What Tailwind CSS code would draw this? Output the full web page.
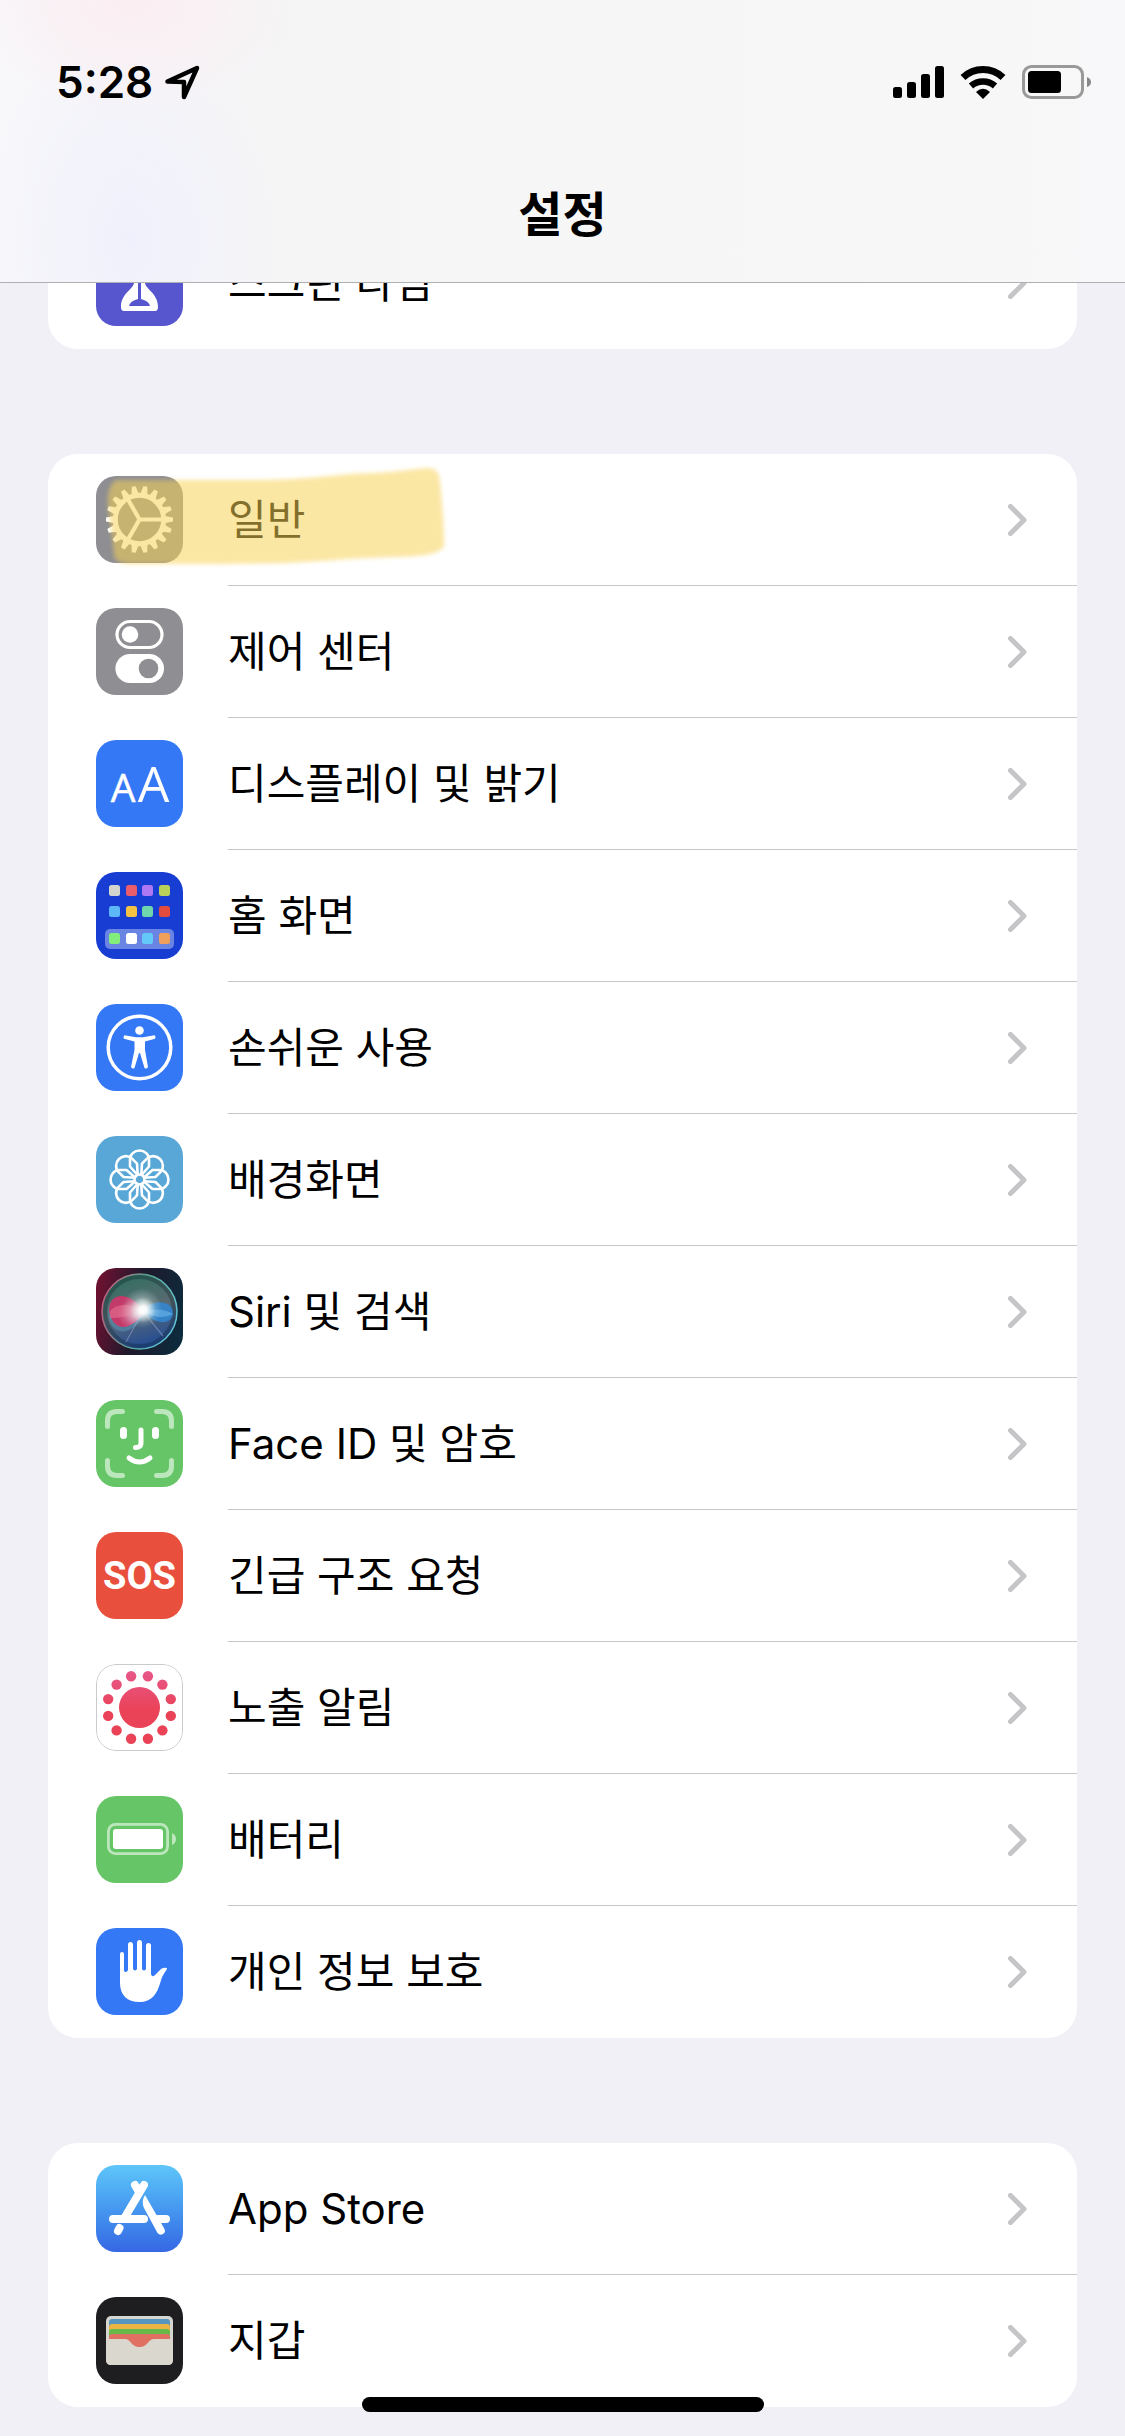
<!DOCTYPE html>
<html lang="ko">
<head>
    <meta charset="UTF-8">
    <meta name="viewport" content="width=device-width, initial-scale=1.0">
    <title>설정</title>
    <script src="https://cdn.jsdelivr.net/npm/@tailwindcss/browser@4"></script>
</head>
<body class="bg-[#f1f0f6] text-black font-['Inter','Noto_Sans_CJK_KR',sans-serif]">
    <!-- 공용 심볼 -->
    <svg class="hidden">
        <symbol id="chevron" viewBox="0 0 19 32">
            <path d="M2.5 2.5 16 16 2.5 29.500" fill="none" stroke="#c5c5c7" stroke-width="5" stroke-linecap="round" stroke-linejoin="round"/>
        </symbol>
    </svg>

    <!-- 상단 헤더 -->
    <header class="fixed inset-x-0 top-0 z-10 h-[283px] border-b border-[#b0b0b4] bg-[#f7f7f7] bg-[radial-gradient(ellipse_170px_120px_at_130px_0px,#fbedf1,transparent),radial-gradient(ellipse_150px_220px_at_130px_240px,#eff0fb,transparent),linear-gradient(90deg,#f8f8fb,#f5f5f6_25%,#f6f6f6_40%,#f7f7f7_85%,#f8f8fa)]">
        <div class="flex h-[164px] items-center justify-between pl-14 pr-[34px]">
            <div class="flex items-center gap-3">
                <span class="text-[44px] font-semibold leading-none">5:28</span>
                <svg class="h-[35px] w-[35px]" viewBox="0 0 35 35" fill="none" stroke="#000" stroke-width="4.500" stroke-linejoin="round">
                    <path d="M2.500 16.500 32 3 19 32 V17 Z"/>
                </svg>
            </div>
            <div class="flex items-center gap-4">
                <!-- 신호 -->
                <svg class="h-[34px] w-[51px]" viewBox="0 0 51 34">
                    <rect x="0" y="22" width="9" height="11" rx="2.500"/>
                    <rect x="14" y="17" width="9" height="16" rx="2.500"/>
                    <rect x="28" y="9" width="9" height="24" rx="2.500"/>
                    <rect x="42" y="1" width="9" height="32" rx="2.500"/>
                </svg>
                <!-- 와이파이 -->
                <svg class="h-[34px] w-[46px]" viewBox="0 0 46 34">
                    <path d="M3 12.500A29 29 0 0 1 43 12.500" fill="none" stroke="#000" stroke-width="7"/>
                    <path d="M11 21A18 18 0 0 1 35 21" fill="none" stroke="#000" stroke-width="6.500"/>
                    <path d="M16 27Q23 20.500 30 27L23 34Z"/>
                </svg>
                <!-- 배터리 -->
                <svg class="h-[34px] w-[69px]" viewBox="0 0 69 34">
                    <rect x="1.500" y="1.500" width="59" height="31" rx="8" fill="none" stroke="#999" stroke-width="3"/>
                    <rect x="6" y="6" width="33" height="22" rx="3.500"/>
                    <path d="M65 12q4 1.500 4 5t-4 5Z" fill="#888"/>
                </svg>
            </div>
        </div>
        <h1 class="flex h-[102px] items-center justify-center text-[48px] font-bold leading-none">설정</h1>
    </header>

    <main class="flex min-h-screen flex-col gap-[105px] px-12 pt-[217px] pb-[29px]">
        <!-- 스크린 타임 -->
        <ul class="overflow-hidden rounded-b-[30px] bg-white text-[42px] leading-none">
            <li>
                <a href="#" class="flex pl-12">
                    <svg class="mt-[22px] h-[87px] w-[87px] shrink-0 rounded-[20px] bg-[#5756ce]" viewBox="0 0 87 87">
                        <path d="M28 15h31q3 0 3 4c0 14-13 18-13 24.500S62 54 62 68q0 4-3 4H28q-3 0-3-4c0-14 13-18 13-24.500S25 33 25 19q0-4 3-4Z" fill="#fff"/>
                        <path d="M42 40h3v20q8 2 9 7H33q1-5 9-7Z" fill="#5756ce"/>
                    </svg>
                    <div class="ml-[45px] flex h-[132px] flex-1 items-center justify-between pr-[50px]">
                        <span>스크린 타임</span>
                        <svg class="h-8 w-[19px]"><use href="#chevron"/></svg>
                    </div>
                </a>
            </li>
        </ul>

        <ul class="rounded-[30px] bg-white text-[42px] leading-none">
            <!-- 일반 -->
            <li class="relative">
                <a href="#" class="flex pl-12">
                    <svg class="mt-[22px] h-[87px] w-[87px] shrink-0 rounded-[20px] bg-[#8e8e93]" viewBox="0 0 87 87">
                        <defs>
                            <path id="teeth" d="M-3.500-26-2-33.500H2L3.500-26ZM-3.500 26-2 33.500H2L3.500 26Z"/>
                        </defs>
                        <g transform="translate(43.500 43.500)" fill="#fff">
                            <circle r="24.200" fill="none" stroke="#fff" stroke-width="5"/>
                            <use href="#teeth" transform="rotate(10)"/>
                            <use href="#teeth" transform="rotate(30)"/>
                            <use href="#teeth" transform="rotate(50)"/>
                            <use href="#teeth" transform="rotate(70)"/>
                            <use href="#teeth" transform="rotate(90)"/>
                            <use href="#teeth" transform="rotate(110)"/>
                            <use href="#teeth" transform="rotate(130)"/>
                            <use href="#teeth" transform="rotate(150)"/>
                            <use href="#teeth" transform="rotate(170)"/>
                            <path d="M0 0H23M0 0-11.500-20M0 0-11.500 20" fill="none" stroke="#fff" stroke-width="4.200"/>
                        </g>
                    </svg>
                    <div class="ml-[45px] flex h-[132px] flex-1 items-center justify-between border-b border-[#c6c6c8] pr-[50px]">
                        <span>일반</span>
                        <svg class="h-8 w-[19px]"><use href="#chevron"/></svg>
                    </div>
                </a>
                <!-- 형광펜 표시 -->
                <svg class="pointer-events-none absolute left-[54px] top-2 h-[110px] w-[346px]" viewBox="0 0 346 110">
                    <path d="M14 18H150C210 18 230 12 270 11 295 10 310 7 325 6 335 6 337 11 338 19 340 40 342 60 342 84 338 92 322 94 300 95 230 96 220 102 120 102H30Q14 102 12 94 10 70 6 46 4 24 14 18Z" fill="#f8d253" fill-opacity=".53" class="blur-[2px]"/>
                </svg>
            </li>
            <!-- 제어 센터 -->
            <li>
                <a href="#" class="flex pl-12">
                    <svg class="mt-[22px] h-[87px] w-[87px] shrink-0 rounded-[20px] bg-[#8e8e93]" viewBox="0 0 87 87">
                        <rect x="21" y="13.500" width="45" height="26" rx="13" fill="none" stroke="#fff" stroke-width="3.200"/>
                        <circle cx="34" cy="26.500" r="8.300" fill="#fff"/>
                        <rect x="19.400" y="46" width="48.600" height="29" rx="14.500" fill="#fff"/>
                        <circle cx="52.500" cy="60.500" r="9.800" fill="#8e8e93"/>
                    </svg>
                    <div class="ml-[45px] flex h-[132px] flex-1 items-center justify-between border-b border-[#c6c6c8] pr-[50px]">
                        <span>제어 센터</span>
                        <svg class="h-8 w-[19px]"><use href="#chevron"/></svg>
                    </div>
                </a>
            </li>
            <!-- 디스플레이 및 밝기 -->
            <li>
                <a href="#" class="flex pl-12">
                    <svg class="mt-[22px] h-[87px] w-[87px] shrink-0 rounded-[20px] bg-[#3478f6]" viewBox="0 0 87 87" fill="#fff" font-family="Open Sans, sans-serif" text-anchor="middle">
                        <text x="27" y="61.500" font-size="39" stroke="#fff" stroke-width=".5">A</text>
                        <text x="57.500" y="61.500" font-size="50">A</text>
                    </svg>
                    <div class="ml-[45px] flex h-[132px] flex-1 items-center justify-between border-b border-[#c6c6c8] pr-[50px]">
                        <span>디스플레이 및 밝기</span>
                        <svg class="h-8 w-[19px]"><use href="#chevron"/></svg>
                    </div>
                </a>
            </li>
            <!-- 홈 화면 -->
            <li>
                <a href="#" class="flex pl-12">
                    <svg class="mt-[22px] h-[87px] w-[87px] shrink-0 rounded-[20px] bg-[#183dd3]" viewBox="0 0 87 87">
                        <rect x="13" y="13" width="11" height="11" rx="2.500" fill="#d5d5d0"/>
                        <rect x="30" y="13" width="11" height="11" rx="2.500" fill="#eb5d6b"/>
                        <rect x="46" y="13" width="11" height="11" rx="2.500" fill="#ae78f5"/>
                        <rect x="63" y="13" width="11" height="11" rx="2.500" fill="#b9d158"/>
                        <rect x="13" y="34" width="11" height="11" rx="2.500" fill="#5db8f8"/>
                        <rect x="30" y="34" width="11" height="11" rx="2.500" fill="#f6c244"/>
                        <rect x="46" y="34" width="11" height="11" rx="2.500" fill="#6fd5ad"/>
                        <rect x="63" y="34" width="11" height="11" rx="2.500" fill="#e34b3f"/>
                        <rect x="9" y="57" width="69" height="20" rx="5" fill="#6a84e3"/>
                        <rect x="13" y="61" width="11" height="11" rx="2.500" fill="#84ee7d"/>
                        <rect x="30" y="61" width="11" height="11" rx="2.500" fill="#fff"/>
                        <rect x="46" y="61" width="11" height="11" rx="2.500" fill="#63c9f9"/>
                        <rect x="63" y="61" width="11" height="11" rx="2.500" fill="#f0a05a"/>
                    </svg>
                    <div class="ml-[45px] flex h-[132px] flex-1 items-center justify-between border-b border-[#c6c6c8] pr-[50px]">
                        <span>홈 화면</span>
                        <svg class="h-8 w-[19px]"><use href="#chevron"/></svg>
                    </div>
                </a>
            </li>
            <!-- 손쉬운 사용 -->
            <li>
                <a href="#" class="flex pl-12">
                    <svg class="mt-[22px] h-[87px] w-[87px] shrink-0 rounded-[20px] bg-[#3478f6]" viewBox="0 0 87 87">
                        <circle cx="43.500" cy="43.500" r="31.300" fill="none" stroke="#fff" stroke-width="3.500"/>
                        <circle cx="43.500" cy="26.500" r="4.300" fill="#fff"/>
                        <path d="M28.500 31.300 40 33.200H47L58.500 31.300Q60.500 33 59 34.800L49 37.500V46L52 63Q50.500 65.500 48.500 64L44 49H43L38.500 64Q36.500 65.500 35 63L38.500 46V37.500L28 34.800Q26.500 33 28.500 31.300Z" fill="#fff"/>
                    </svg>
                    <div class="ml-[45px] flex h-[132px] flex-1 items-center justify-between border-b border-[#c6c6c8] pr-[50px]">
                        <span>손쉬운 사용</span>
                        <svg class="h-8 w-[19px]"><use href="#chevron"/></svg>
                    </div>
                </a>
            </li>
            <!-- 배경화면 -->
            <li>
                <a href="#" class="flex pl-12">
                    <svg class="mt-[22px] h-[87px] w-[87px] shrink-0 rounded-[20px] bg-[#59a7d7]" viewBox="0 0 87 87">
                        <defs>
                            <path id="petal" d="M-2-4.500-9.500-13V-20A9.500 9 0 0 1 9.500-20V-13L2-4.500"/>
                        </defs>
                        <g transform="translate(43.500 43.500)" fill="none" stroke="#fff" stroke-width="2.600" stroke-linejoin="round">
                            <circle r="5"/>
                            <use href="#petal"/>
                            <use href="#petal" transform="rotate(45)"/>
                            <use href="#petal" transform="rotate(90)"/>
                            <use href="#petal" transform="rotate(135)"/>
                            <use href="#petal" transform="rotate(180)"/>
                            <use href="#petal" transform="rotate(225)"/>
                            <use href="#petal" transform="rotate(270)"/>
                            <use href="#petal" transform="rotate(315)"/>
                        </g>
                    </svg>
                    <div class="ml-[45px] flex h-[132px] flex-1 items-center justify-between border-b border-[#c6c6c8] pr-[50px]">
                        <span>배경화면</span>
                        <svg class="h-8 w-[19px]"><use href="#chevron"/></svg>
                    </div>
                </a>
            </li>
            <!-- Siri -->
            <li>
                <a href="#" class="flex pl-12">
                    <svg class="mt-[22px] h-[87px] w-[87px] shrink-0 rounded-[20px]" viewBox="0 0 87 87">
                        <defs>
                            <linearGradient id="siriBg" x1="0" y1=".4" x2="1" y2=".6">
                                <stop offset="0" stop-color="#6b1230"/>
                                <stop offset=".45" stop-color="#20182c"/>
                                <stop offset="1" stop-color="#0d2b3c"/>
                            </linearGradient>
                            <linearGradient id="siriOrb" x1=".3" y1="0" x2=".6" y2="1">
                                <stop offset="0" stop-color="#2f6f60"/>
                                <stop offset=".5" stop-color="#5a6a72"/>
                                <stop offset="1" stop-color="#204a98"/>
                            </linearGradient>
                            <linearGradient id="siriRing" x1="0" y1=".3" x2="1" y2=".6">
                                <stop offset="0" stop-color="#c75a7c"/>
                                <stop offset=".5" stop-color="#57a592"/>
                                <stop offset="1" stop-color="#62c6d8"/>
                            </linearGradient>
                            <radialGradient id="siriPink" cx=".75" cy=".6">
                                <stop offset="0" stop-color="#f4a4bd"/>
                                <stop offset="1" stop-color="#d62e62"/>
                            </radialGradient>
                            <radialGradient id="siriGlow">
                                <stop offset="0" stop-color="#fff"/>
                                <stop offset=".3" stop-color="#fff" stop-opacity=".9"/>
                                <stop offset="1" stop-color="#cfeee8" stop-opacity="0"/>
                            </radialGradient>
                        </defs>
                        <rect width="87" height="87" fill="url(#siriBg)"/>
                        <circle cx="43.500" cy="43.500" r="37.500" fill="url(#siriOrb)" stroke="url(#siriRing)" stroke-width="1.500"/>
                        <circle cx="43.500" cy="43.500" r="34.500" fill="none" stroke="#071a22" stroke-opacity=".3" stroke-width="4"/>
                        <path d="M12 46C12 24 32 24 47 41 59 30 76 34 76 45S61 57 49 46C32 74 13 64 12 46Z" fill="#5c9cbd" fill-opacity=".5"/>
                        <path d="M13 43C13 22 36 24 48 44 36 63 17 65 13 43Z" fill="url(#siriPink)" fill-opacity=".85"/>
                        <path d="M14 43Q28 30 48 44 29 50 14 50Z" fill="#f0839f" fill-opacity=".45"/>
                        <path d="M48 44C56 30 76 32 77 44S61 59 48 44Z" fill="#2e83d1" fill-opacity=".8"/>
                        <path d="M48 44Q64 38 77 46 65 53 48 44Z" fill="#6bb5ec" fill-opacity=".6"/>
                        <path d="M46 45 30 74M50 47 67 68" stroke="#9ba6cf" stroke-opacity=".5" stroke-width="1.200"/>
                        <ellipse cx="46" cy="40" rx="20" ry="20" fill="url(#siriGlow)" fill-opacity=".5"/>
                        <ellipse cx="47" cy="42" rx="13" ry="13" fill="url(#siriGlow)"/>
                    </svg>
                    <div class="ml-[45px] flex h-[132px] flex-1 items-center justify-between border-b border-[#c6c6c8] pr-[50px]">
                        <span>Siri 및 검색</span>
                        <svg class="h-8 w-[19px]"><use href="#chevron"/></svg>
                    </div>
                </a>
            </li>
            <!-- Face ID -->
            <li>
                <a href="#" class="flex pl-12">
                    <svg class="mt-[22px] h-[87px] w-[87px] shrink-0 rounded-[20px] bg-[#66c567]" viewBox="0 0 87 87" fill="none" stroke="#fff" stroke-width="5" stroke-linecap="round">
                        <path d="M11.500 26.500V21Q11.500 11.500 21 11.500H26.500M60.500 11.500H66Q75.500 11.500 75.500 21V26.500M75.500 60.500V66Q75.500 75.500 66 75.500H60.500M26.500 75.500H21Q11.500 75.500 11.500 66V60.500" stroke="#bce7bd"/>
                        <path d="M27.500 30.500V35.500M59.500 30.500V35.500" stroke-width="7"/>
                        <path d="M45 30V43Q45 47.500 39.500 47.500M33 58Q43.500 66 54 58"/>
                    </svg>
                    <div class="ml-[45px] flex h-[132px] flex-1 items-center justify-between border-b border-[#c6c6c8] pr-[50px]">
                        <span>Face ID 및 암호</span>
                        <svg class="h-8 w-[19px]"><use href="#chevron"/></svg>
                    </div>
                </a>
            </li>
            <!-- 긴급 구조 요청 -->
            <li>
                <a href="#" class="flex pl-12">
                    <svg class="mt-[22px] h-[87px] w-[87px] shrink-0 rounded-[20px] bg-[#e94f3d]" viewBox="0 0 87 87">
                        <text x="43.500" y="57" text-anchor="middle" font-family="Roboto, sans-serif" font-weight="700" font-size="38" fill="#fff">SOS</text>
                    </svg>
                    <div class="ml-[45px] flex h-[132px] flex-1 items-center justify-between border-b border-[#c6c6c8] pr-[50px]">
                        <span>긴급 구조 요청</span>
                        <svg class="h-8 w-[19px]"><use href="#chevron"/></svg>
                    </div>
                </a>
            </li>
            <!-- 노출 알림 -->
            <li>
                <a href="#" class="flex pl-12">
                    <svg class="mt-[22px] h-[87px] w-[87px] shrink-0 rounded-[20px] bg-white" viewBox="0 0 87 87">
                        <defs>
                            <linearGradient id="exposure" gradientUnits="userSpaceOnUse" x1="0" y1="7" x2="0" y2="60">
                                <stop offset="0" stop-color="#e7588a"/>
                                <stop offset=".75" stop-color="#ea4257"/>
                            </linearGradient>
                        </defs>
                        <rect x=".5" y=".5" width="86" height="86" rx="19.500" fill="none" stroke="#cbcbcd"/>
                        <g fill="url(#exposure)">
                            <circle cx="43.500" cy="43.500" r="20.500"/>
                            <circle cx="35.100" cy="12.200" r="5.200"/>
                            <circle cx="51.900" cy="12.200" r="5.200"/>
                            <circle cx="20.600" cy="20.600" r="5.200"/>
                            <circle cx="66.400" cy="20.600" r="5.200"/>
                            <circle cx="12.200" cy="35.100" r="5.200"/>
                            <circle cx="74.800" cy="35.100" r="5.200"/>
                            <circle cx="12.200" cy="51.900" r="5.200"/>
                            <circle cx="74.800" cy="51.900" r="5.200"/>
                            <circle cx="20.600" cy="66.400" r="5.200"/>
                            <circle cx="66.400" cy="66.400" r="5.200"/>
                            <circle cx="35.100" cy="74.800" r="5.200"/>
                            <circle cx="51.900" cy="74.800" r="5.200"/>
                        </g>
                    </svg>
                    <div class="ml-[45px] flex h-[132px] flex-1 items-center justify-between border-b border-[#c6c6c8] pr-[50px]">
                        <span>노출 알림</span>
                        <svg class="h-8 w-[19px]"><use href="#chevron"/></svg>
                    </div>
                </a>
            </li>
            <!-- 배터리 -->
            <li>
                <a href="#" class="flex pl-12">
                    <svg class="mt-[22px] h-[87px] w-[87px] shrink-0 rounded-[20px] bg-[#66c567]" viewBox="0 0 87 87">
                        <rect x="12.400" y="28.400" width="59.200" height="29.200" rx="7" fill="none" stroke="#bce7bd" stroke-width="2.800"/>
                        <rect x="17" y="33" width="50" height="20" rx="3" fill="#fff"/>
                        <path d="M76 37q4 2 4 6t-4 6Z" fill="#bce7bd"/>
                    </svg>
                    <div class="ml-[45px] flex h-[132px] flex-1 items-center justify-between border-b border-[#c6c6c8] pr-[50px]">
                        <span>배터리</span>
                        <svg class="h-8 w-[19px]"><use href="#chevron"/></svg>
                    </div>
                </a>
            </li>
            <!-- 개인 정보 보호 -->
            <li>
                <a href="#" class="flex pl-12">
                    <svg class="mt-[22px] h-[87px] w-[87px] shrink-0 rounded-[20px] bg-[#3478f6]" viewBox="0 0 87 87">
                        <path d="M24 55V26Q24 24 26 24T28 26V42.500Q28.500 44.500 30 44T32 42V17Q32 14 34.500 14T37 17V40.500Q37.200 42.500 39 42.500T41 40.500V15Q41 12 43.500 12T46 15V40.500Q46 42.500 48 42.500T50 40.500V17.500Q50 15 52.500 15T55 17.500V46Q56 50 59 47L65 41Q68 39 71 40 71 42 69 44 66 48 64.500 54C61 66 56 74 43.500 74 31 74 24 67 24 55Z" fill="#fff"/>
                    </svg>
                    <div class="ml-[45px] flex h-[132px] flex-1 items-center justify-between pr-[50px]">
                        <span>개인 정보 보호</span>
                        <svg class="h-8 w-[19px]"><use href="#chevron"/></svg>
                    </div>
                </a>
            </li>
        </ul>

        <ul class="rounded-[30px] bg-white text-[42px] leading-none">
            <!-- App Store -->
            <li>
                <a href="#" class="flex pl-12">
                    <svg class="mt-[22px] h-[87px] w-[87px] shrink-0 rounded-[20px] bg-linear-to-b from-[#5ec6f9] to-[#3667e4]" viewBox="0 0 87 87" fill="none" stroke="#fff" stroke-width="8" stroke-linecap="round">
                        <path d="M48 20 29 52M39 20 43 27M17 54H48M62 54H70M23.500 63 22 66"/>
                        <path d="M49 30Q45 36 48 43L61.500 68Q64 71 67 69T68.500 64Z" fill="#fff" stroke="none"/>
                    </svg>
                    <div class="ml-[45px] flex h-[132px] flex-1 items-center justify-between border-b border-[#c6c6c8] pr-[50px]">
                        <span>App Store</span>
                        <svg class="h-8 w-[19px]"><use href="#chevron"/></svg>
                    </div>
                </a>
            </li>
            <!-- 지갑 -->
            <li>
                <a href="#" class="flex pl-12">
                    <svg class="mt-[22px] h-[87px] w-[87px] shrink-0 rounded-[20px] bg-[#1e1e20]" viewBox="0 0 87 87">
                        <rect x="10" y="19" width="67" height="49" rx="5" fill="#d5d6cf"/>
                        <rect x="13" y="22" width="61" height="20" rx="3" fill="#5896bf"/>
                        <rect x="13" y="27" width="61" height="18" rx="3" fill="#edb443"/>
                        <rect x="13" y="32" width="61" height="15" rx="3" fill="#67b94a"/>
                        <rect x="13" y="37" width="61" height="16" rx="3" fill="#e07162"/>
                        <path d="M10 42H29C35 42 35 50 43.500 50S52 42 58 42H77V63Q77 68 72 68H15Q10 68 10 63Z" fill="#dad7ce"/>
                    </svg>
                    <div class="ml-[45px] flex h-[132px] flex-1 items-center justify-between pr-[50px]">
                        <span>지갑</span>
                        <svg class="h-8 w-[19px]"><use href="#chevron"/></svg>
                    </div>
                </a>
            </li>
        </ul>
    </main>

    <!-- 홈 인디케이터 -->
    <div class="fixed inset-x-0 bottom-6 z-10 flex justify-center">
        <div class="h-[15px] w-[402px] rounded-full bg-black"></div>
    </div>
</body>
</html>
